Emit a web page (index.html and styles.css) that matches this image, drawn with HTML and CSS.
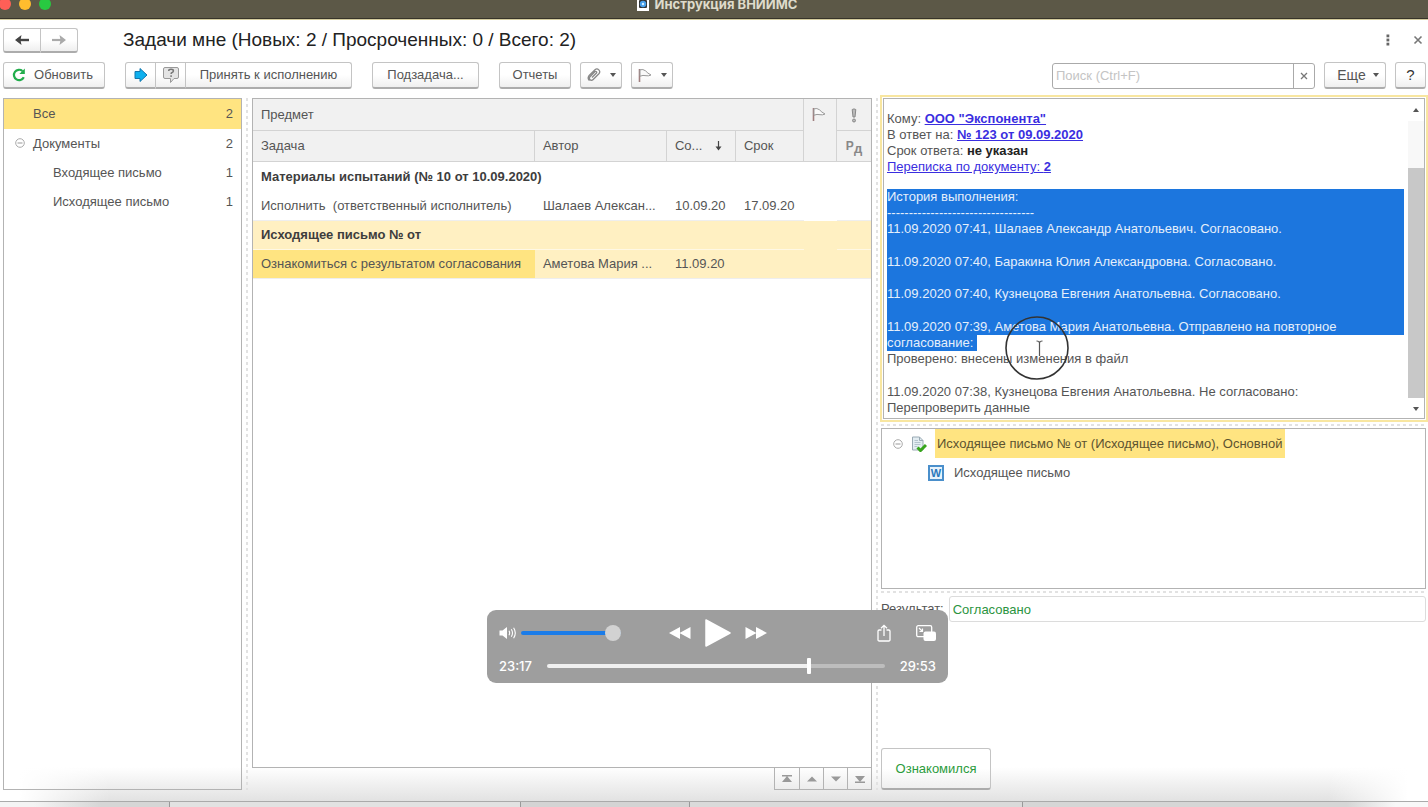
FILE: index.html
```html
<!DOCTYPE html>
<html lang="ru">
<head>
<meta charset="utf-8">
<title>Инструкция ВНИИМС</title>
<link rel="stylesheet" href="styles.css">
</head>
<body>
<header class="titlebar">
  <div class="lights"><span class="light red"></span><span class="light amber"></span><span class="light green"></span></div>
  <div class="doc-title">
    <svg width="12" height="14" viewBox="0 0 12 14"><rect width="12" height="14" fill="#fff"/><rect x="2" y="3" width="8" height="8" rx="1" fill="#333"/><circle cx="6" cy="7" r="3.2" fill="#49a0ea"/><circle cx="6" cy="7" r="1.2" fill="#d6efff"/></svg>
    <span>Инструкция ВНИИМС</span>
  </div>
</header>

<div class="heading">
  <div class="group nav">
    <button class="btn seg" aria-label="Назад"><svg width="16" height="12" viewBox="0 0 16 12"><path d="M3 6H15" fill="none" stroke="#444" stroke-width="2.400"/><path d="M7.500 1L1 6l6.500 5L6.500 6z" fill="#444"/></svg></button>
    <button class="btn seg" aria-label="Вперед"><svg width="16" height="12" viewBox="0 0 16 12"><path d="M1 6H13" fill="none" stroke="#aaa" stroke-width="2.200"/><path d="M8.500 1L15 6l-6.500 5L9.500 6z" fill="#aaa"/></svg></button>
  </div>
  <h1>Задачи мне (Новых: 2 / Просроченных: 0 / Всего: 2)</h1>
  <div class="window-tools">
    <button class="bare" aria-label="Меню"><svg width="4" height="12" viewBox="0 0 4 12" fill="#666"><rect x="0.500" y="0.500" width="2.800" height="2.800"/><rect x="0.500" y="4.600" width="2.800" height="2.800"/><rect x="0.500" y="8.700" width="2.800" height="2.800"/></svg></button>
    <button class="bare" aria-label="Закрыть"><svg width="10" height="10" viewBox="0 0 10 10"><path d="M1.500 1.500l7 7M8.500 1.500l-7 7" stroke="#777" stroke-width="1.600"/></svg></button>
  </div>
</div>

<div class="toolbar">
  <button class="btn refresh"><svg width="14" height="14" viewBox="0 0 14 14"><path d="M11.800 9.300A5.200 5.200 0 1 1 10.500 3" fill="none" stroke="#21ad4b" stroke-width="2.200"/><path d="M12.800 0.500v5.500h-5.500z" fill="#21ad4b"/></svg>Обновить</button>
  <div class="group accept">
    <button class="btn seg icon-seg" aria-label="Перейти"><svg width="14" height="16" viewBox="0 0 14 16"><path d="M1 4.500h5V1.500L13 8l-7 6.500v-3H1z" fill="#0fb0ee" stroke="#1277ae"/></svg></button>
    <button class="btn seg icon-seg" aria-label="Вопрос"><svg width="18" height="18" viewBox="0 0 18 18"><path d="M3 1.500h12a1.500 1.500 0 0 1 1.500 1.500v8a1.500 1.500 0 0 1-1.500 1.500h-3l-3.500 4v-4H3A1.500 1.500 0 0 1 1.500 11V3A1.500 1.500 0 0 1 3 1.500z" fill="#e4e4e4" stroke="#999"/><path d="M6.700 5q0-1.700 2.300-1.700 2.400 0 2.400 1.600 0 1-1.300 1.600-1 .4-1 1.500" fill="none" stroke="#777" stroke-width="1.500"/><rect x="8.300" y="9.300" width="1.600" height="1.600" fill="#777"/></svg></button>
    <button class="btn seg wide-seg">Принять к исполнению</button>
  </div>
  <button class="btn subtask">Подзадача...</button>
  <button class="btn reports">Отчеты</button>
  <button class="btn drop" aria-label="Файлы"><svg width="14" height="14" viewBox="0 0 14 14"><path d="M5 9.500L9.500 5a1 1 0 0 0-1.400-1.400L3 8.800a2 2 0 0 0 2.900 2.900l6-6A2.800 2.800 0 0 0 8 1.700L1.900 7.800a3.400 3.400 0 0 0 .6 4.800" fill="none" stroke="#888" stroke-width="1.300"/></svg><i class="caret"></i></button>
  <button class="btn drop" aria-label="Флаг"><svg width="14" height="15" viewBox="0 0 14 15"><path d="M1.500 1v13" stroke="#a07f7f" stroke-width="1.600"/><path d="M2 1.800q3-1 5.500 1 2 2.400 5.500 4.200-2.500 1.300-5 .7-3-.8-6 .5z" fill="#fafafa" stroke="#999"/></svg><i class="caret"></i></button>
  <div class="search">
    <input type="text" aria-label="Поиск" placeholder="Поиск (Ctrl+F)">
    <button class="clear" aria-label="Очистить"><svg width="8" height="8" viewBox="0 0 8 8"><path d="M1 1l6 6M7 1l-6 6" stroke="#777" stroke-width="1.300"/></svg></button>
  </div>
  <button class="btn more">Еще<i class="caret"></i></button>
  <button class="btn help">?</button>
</div>

<main class="panes">
  <nav class="box tree">
    <div class="tree-row selected"><span>Все</span><span>2</span></div>
    <div class="tree-row"><svg class="toggle" width="10" height="10" viewBox="0 0 10 10"><circle cx="5" cy="5" r="4.300" fill="none" stroke="#aaa"/><path d="M2.500 5h5" stroke="#999"/></svg><span>Документы</span><span>2</span></div>
    <div class="tree-row child"><span>Входящее письмо</span><span>1</span></div>
    <div class="tree-row child"><span>Исходящее письмо</span><span>1</span></div>
  </nav>
  <div class="split-v"></div>
  <section class="center">
    <div class="box list">
      <table>
        <colgroup><col><col class="c-author"><col class="c-date"><col class="c-due"><col class="c-flag"><col class="c-mark"></colgroup>
        <thead>
          <tr><th colspan="4">Предмет</th><th rowspan="2" class="flag"><svg width="14" height="15" viewBox="0 0 14 15"><path d="M1.500 1v13" stroke="#a07f7f" stroke-width="1.600"/><path d="M2 1.800q3-1 5.500 1 2 2.400 5.500 4.200-2.500 1.300-5 .7-3-.8-6 .5z" fill="#fafafa" stroke="#999"/></svg></th><th class="mark"><svg width="6" height="15" viewBox="0 0 6 15"><path d="M1.200 1.500q1.800-1.200 3.600 0L4 9H2z" fill="#bbb" stroke="#888"/><circle cx="3" cy="12.500" r="1.500" fill="#bbb" stroke="#888"/></svg></th></tr>
          <tr class="second"><th>Задача</th><th>Автор</th><th><span class="sort">Со...<svg width="7" height="10" viewBox="0 0 7 10"><path d="M3.500 0v8" stroke="#444" stroke-width="1.200"/><path d="M0.500 5.500h6l-3 4z" fill="#444"/></svg></span></th><th>Срок</th><th class="mark"><b class="rd">Р<sub>д</sub></b></th></tr>
        </thead>
        <tbody>
          <tr class="subject"><td colspan="4">Материалы испытаний (№ 10 от 10.09.2020)</td><td rowspan="2"></td><td></td></tr>
          <tr class="task"><td class="pre">Исполнить  (ответственный исполнитель)</td><td>Шалаев Алексан...</td><td>10.09.20</td><td>17.09.20</td><td></td></tr>
          <tr class="subject current"><td colspan="4">Исходящее письмо № от</td><td rowspan="2"></td><td></td></tr>
          <tr class="task current"><td class="cell-current">Ознакомиться с результатом согласования</td><td>Аметова Мария ...</td><td>11.09.20</td><td></td><td></td></tr>
        </tbody>
      </table>
    </div>
    <div class="pager">
      <button aria-label="В начало"><svg width="12" height="8" viewBox="0 0 12 8" fill="#999"><path d="M1 0h10v1.500H1zM6 1l5 6H1z"/></svg></button>
      <button aria-label="Вверх"><svg width="12" height="8" viewBox="0 0 12 8" fill="#999"><path d="M6 1.500l5 5H1z"/></svg></button>
      <button aria-label="Вниз"><svg width="12" height="8" viewBox="0 0 12 8" fill="#999"><path d="M6 6.500l5-5H1z"/></svg></button>
      <button aria-label="В конец"><svg width="12" height="8" viewBox="0 0 12 8" fill="#999"><path d="M1 6.500h10V8H1zM6 7l5-6H1z"/></svg></button>
    </div>
  </section>
  <div class="split-v"></div>
  <section class="right">
    <div class="focus">
      <div class="box memo">
        <div class="memo-text">
          <p>Кому: <a href="#"><b>ООО "Экспонента"</b></a></p>
          <p>В ответ на: <a href="#"><b>№ 123 от 09.09.2020</b></a></p>
          <p>Срок ответа: <b class="dark">не указан</b></p>
          <p><a href="#">Переписка по документу: <b>2</b></a></p>
          <div class="marked">
            <p>История выполнения:</p>
            <p>----------------------------------</p>
            <p>11.09.2020 07:41, Шалаев Александр Анатольевич. Согласовано.</p>
            <p class="gap"></p>
            <p>11.09.2020 07:40, Баракина Юлия Александровна. Согласовано.</p>
            <p></p>
            <p>11.09.2020 07:40, Кузнецова Евгения Анатольевна. Согласовано.</p>
            <p class="gap"></p>
            <p>11.09.2020 07:39, Аметова Мария Анатольевна. Отправлено на повторное</p>
          </div>
          <p><span class="marked-inline">согласование: </span></p>
          <p>Проверено: внесены изменения в файл</p>
          <p class="gap"></p>
          <p>11.09.2020 07:38, Кузнецова Евгения Анатольевна. Не согласовано:</p>
          <p>Перепроверить данные</p>
          <svg class="pointer" width="64" height="64" viewBox="0 0 64 64" fill="none"><circle cx="32" cy="32" r="31" stroke="#333" stroke-width="1.600"/><path d="M31.500 25q3 0 3 2v13M37.500 25q-3 0-3 2" stroke="#555" stroke-width="1.200"/></svg>
        </div>
        <div class="scroll"><i class="up"></i><div class="track"><div class="thumb"></div></div><i class="caret"></i></div>
      </div>
    </div>
    <div class="split-h"></div>
    <div class="box files">
      <div class="file-row"><svg width="10" height="10" viewBox="0 0 10 10"><circle cx="5" cy="5" r="4.300" fill="none" stroke="#aaa"/><path d="M2.500 5h5" stroke="#999"/></svg><svg width="16" height="16" viewBox="0 0 16 16"><path d="M1.500 1h7l3.500 3.500V14H1.500z" fill="#e3edf2" stroke="#9aaab4"/><path d="M8.500 1v3.500H12" fill="none" stroke="#9aaab4"/><path d="M3.500 4.500h3.500M3.500 6.500h6M3.500 8.500h6M3.500 10.500h3" stroke="#b4c4cd"/><path d="M6.500 11.500l3 3L15 9" fill="none" stroke="#37a51c" stroke-width="3"/></svg><span class="file-current">Исходящее письмо № от (Исходящее письмо), Основной</span></div>
      <div class="file-row nested"><span class="word">W</span><span>Исходящее письмо</span></div>
    </div>
    <div class="split-h"></div>
    <div class="result"><label for="result">Результат:</label><input id="result" type="text" value="Согласовано"></div>
    <button class="btn confirm">Ознакомился</button>
  </section>
</main>

<footer class="tabs"><span class="t1"></span><span class="t2"></span><span class="t3"></span><span class="t4"></span><span class="t5"></span></footer>

<div class="player">
  <div class="controls">
    <div class="volume"><svg width="18" height="14" viewBox="0 0 18 14"><path d="M0.500 4.500h3L8 1v12L3.500 9.500h-3z" fill="#fff"/><path d="M10 4.800q1.300 2.200 0 4.400M12.300 3.200q2.400 3.800 0 7.600M14.600 1.800q3.400 5.200 0 10.400" fill="none" stroke="#fff" stroke-width="1.100"/></svg><input type="range" aria-label="Громкость" min="0" max="100" value="100"></div>
    <div class="transport">
      <button class="bare" aria-label="Назад"><svg width="22" height="14" viewBox="0 0 22 14" fill="#fff"><path d="M11 1v12L0 7zM21.500 1v12L10.500 7z"/></svg></button>
      <button class="bare" aria-label="Воспроизвести"><svg width="26" height="28" viewBox="0 0 26 28" fill="#fff" stroke="#fff" stroke-width="1.500" stroke-linejoin="round"><path d="M1 1l24 13L1 27z"/></svg></button>
      <button class="bare" aria-label="Вперед"><svg width="22" height="14" viewBox="0 0 22 14" fill="#fff"><path d="M0.500 1v12l11-6zM11 1v12l11-6z"/></svg></button>
    </div>
    <div class="share">
      <button class="bare" aria-label="Поделиться"><svg width="14" height="18" viewBox="0 0 14 18" fill="none" stroke="#fff" stroke-width="1.300"><path d="M4.500 6H2.200a1.200 1.200 0 0 0-1.200 1.200v8.500A1.200 1.200 0 0 0 2.200 17h9.600a1.200 1.200 0 0 0 1.200-1.300V7.200A1.200 1.200 0 0 0 11.800 6H9.500M7 12V1.500M4 4.300l3-3 3 3"/></svg></button>
      <button class="bare" aria-label="Картинка в картинке"><svg width="20" height="18" viewBox="0 0 20 18"><rect x="0.700" y="1.700" width="15" height="11" rx="1.500" fill="none" stroke="#fff" stroke-width="1.300"/><path d="M3 4l3 3M6.500 4.500v3h-3" fill="none" stroke="#fff" stroke-width="1.200"/><rect x="7.500" y="7.500" width="12.500" height="9.500" rx="2" fill="#fff"/></svg></button>
    </div>
  </div>
  <div class="timeline"><span>23:17</span><input type="range" aria-label="Позиция" min="0" max="1793" value="1397"><span>29:53</span></div>
</div>
</body>
</html>
```
FILE: styles.css
```css
* { box-sizing: border-box; }
body {
  margin: 0;
  min-height: 100vh;
  display: flex;
  flex-direction: column;
  position: relative;
  font: 13px/16px "Liberation Sans", Arial, sans-serif;
  color: #555;
  background:
    linear-gradient(to right, #fff 20px, transparent 110px, transparent calc(100% - 100px), #fff calc(100% - 20px)),
    linear-gradient(to top, #e2e2e2 6px, #fff 40px);
}
button, input { font: inherit; color: inherit; margin: 0; }
button { padding: 0; }
p, h1 { margin: 0; }

.titlebar {
  height: 19px;
  margin-bottom: 1px;
  position: relative;
  background: #5c5847;
  border-bottom: 1px solid #37342a;
  box-shadow: 0 1px 0 #d5cd9f;
  display: flex;
  justify-content: center;
}
.lights { position: absolute; left: 0; top: 0; display: flex; gap: 8px; margin: -2px 0 0 -1px; }
.light { width: 12px; height: 12px; border-radius: 50%; }
.red { background: #ff5f57; }
.amber { background: #ffbd2e; }
.green { background: #28c941; }
.doc-title { display: flex; align-items: center; gap: 6px; height: 16px; margin-top: -4px; padding-left: 6px; font: 700 13px/16px Inter, sans-serif; color: #dedbcb; }

.btn {
  height: 27px;
  border: 1px solid #c4c4c4;
  border-bottom: 2px solid #acacac;
  border-radius: 3px;
  background: linear-gradient(#fff 50%, #efefef);
  display: flex;
  align-items: center;
  justify-content: center;
}
.bare { border: 0; background: none; display: flex; }
.group { display: flex; }
.seg { border-radius: 0; }
.seg + .seg { border-left: 0; }
.seg:first-child { border-radius: 3px 0 0 3px; }
.seg:last-child { border-radius: 0 3px 3px 0; }
.caret { border: 3px solid transparent; border-top: 4px solid #555; border-bottom: 0; }

.heading { display: flex; align-items: center; height: 42px; padding: 0 5px 2px 3px; }
.nav .btn { width: 37px; height: 25px; }
.nav .btn:first-child { width: 38px; }
h1 { font-size: 19px; line-height: 24px; font-weight: 400; color: #222; margin-left: 45px; }
.window-tools { margin-left: auto; display: flex; align-items: center; gap: 23px; }

.toolbar { display: flex; align-items: center; height: 27px; padding: 0 2px 0 3px; }
.refresh { width: 102px; gap: 8px; margin-right: 20px; padding-right: 3px; }
.icon-seg { width: 30px; }
.icon-seg:first-child { width: 31px; }
.wide-seg { width: 166px; }
.subtask { width: 107px; margin-left: 20px; }
.reports { width: 72px; margin-left: 20px; }
.drop { width: 42px; gap: 9px; margin-left: 9px; }
.search { flex: 0 1 263px; min-width: 0; height: 26px; margin-left: auto; display: flex; border: 1px solid #aaa; border-radius: 3px; background: #fff; }
.search input { flex: 1; min-width: 0; border: 0; padding: 0 3px; background: none; }
.search input::placeholder { color: #c4c4c4; opacity: 1; }
.clear { width: 21px; border: 0; border-left: 1px solid #aaa; background: none; display: flex; align-items: center; justify-content: center; }
.more { width: 62px; gap: 7px; margin-left: 9px; font-size: 14px; padding-left: 6px; }
.help { width: 31px; margin-left: 9px; font-size: 15px; color: #333; }

.panes { flex: 1; display: grid; grid-template-columns: 239px 10px minmax(0, 620fr) 9px minmax(0, 547fr); padding: 9px 0 11px 3px; }
.box { border: 1px solid #b3b3b3; background: #fff; }
.split-v { width: 2px; margin: 0 auto; background: repeating-linear-gradient(#e2e2e2 0 3px, transparent 3px 6px); }
.split-h { height: 2px; margin: 2px 0; background: repeating-linear-gradient(to right, #e2e2e2 0 3px, transparent 3px 6px); }
.tree { background: none; }
.tree-row { height: 29px; display: flex; align-items: center; justify-content: space-between; padding: 0 8px 0 29px; position: relative; }
.tree-row.selected { height: 30px; background: #ffe481; }
.tree-row.child { padding-left: 49px; }
.toggle { position: absolute; left: 11px; top: 9px; }

.center { display: flex; flex-direction: column; }
.list { flex: 1; }
table { width: 100%; table-layout: fixed; border-collapse: separate; border-spacing: 0; }
.c-author { width: 132px; }
.c-date { width: 69px; }
.c-due { width: 68px; }
.c-flag { width: 33px; }
.c-mark { width: 34px; }
th, td { padding: 0 8px; text-align: left; white-space: nowrap; overflow: hidden; }
th { height: 32px; font-weight: 400; background: #f1f1f1; border-right: 1px solid #d3d3d3; border-bottom: 1px solid #d3d3d3; }
.second th { height: 31px; }
th.mark { border-right: 0; padding: 0; text-align: center; }
.flag { vertical-align: top; padding-top: 8px; }
th svg { vertical-align: middle; }
.flag svg { display: block; }
.sort { display: flex; align-items: center; justify-content: space-between; padding-right: 5px; }
.rd { font-size: 12px; color: #888; }
.rd sub { font-size: 13px; line-height: 0; vertical-align: -3px; }
td { height: 29px; }
.subject td { font-weight: 700; color: #3d3d3d; }
.task td { height: 30px; border-bottom: 1px solid #eee; }
.pre { white-space: pre; }
.current td { background: #fff0c2; }
.subject.current td { height: 29px; border-bottom: 1px solid #fff8e4; }
.subject.current td[rowspan] { border-bottom-color: #eee; }
.task.current td { height: 29px; }
.current .cell-current { background: #ffe481; }
.pager { align-self: flex-end; display: flex; border: 1px solid #b3b3b3; border-top: 0; }
.pager button { width: 24px; height: 21px; border: 0; background: none; display: flex; align-items: center; justify-content: center; }
.pager button + button { border-left: 1px solid #b3b3b3; }

.right { display: flex; flex-direction: column; padding-right: 2px; }
.focus { border: 2px solid #f8e6a0; margin: -3px -2px 0 -1px; padding: 1px; }
.memo { display: flex; height: 321px; }
.memo-text { flex: 1; padding: 12px 3px 0; position: relative; overflow: hidden; }
.memo-text p { min-height: 16px; }
.memo-text .gap { min-height: 17px; }
a { color: #3a2ee0; }
.dark { color: #222; }
.marked { margin-top: 14px; }
.marked, .marked-inline { background: #1c76de; color: #e5effb; }
.marked-inline { white-space: pre; display: inline-block; }
.pointer { position: absolute; left: 121px; top: 217px; }
.scroll { width: 17px; display: flex; flex-direction: column; align-items: center; padding: 9px 0 7px; }
.up { border: 3px solid transparent; border-bottom: 4px solid #555; border-top: 0; }
.track { flex: 1; width: 16px; margin: 9px 0; background: #f8f8f8; display: flex; flex-direction: column; justify-content: flex-end; }
.thumb { height: 83%; background: #c8c8c8; }
.files { height: 161px; }
.file-row { height: 29px; display: flex; align-items: center; gap: 8px; padding-left: 11px; }
.file-row.nested { padding-left: 46px; gap: 10px; }
.file-current { align-self: stretch; display: flex; align-items: center; padding: 0 3px 0 2px; background: #ffe481; color: #5c5330; }
.word { width: 16px; height: 16px; border: 2px solid #4a8fcb; background: #e8f3fb; color: #2a78bd; font-size: 11px; line-height: 12px; font-weight: 700; text-align: center; }
.result { display: flex; align-items: center; gap: 5px; margin-top: 1px; }
.result input { flex: 1; min-width: 0; height: 26px; border: 1px solid #dcdcdc; border-radius: 3px; padding: 0 3px; color: #2b9440; background: #fff; }
.confirm { width: 110px; height: 42px; margin-top: auto; color: #2b9c3c; }

.tabs { height: 6px; border-top: 1px solid #aaa; display: flex; background: #dadada; }
.tabs span { border-right: 1px solid #999; }
.t1 { flex: 169; background: linear-gradient(to right, #f4f4f4 20%, #d6d6d6 60%); }
.t2 { flex: 351; background: #e2e2e2; }
.t3 { flex: 169; background: #d4d4d4; }
.t4 { flex: 333; }
.tabs .t5 { flex: 406; border-right: 0; background: linear-gradient(to right, #d6d6d6 80%, #f8f8f8 92%); }

.player { position: absolute; left: 487px; top: 610px; width: 461px; height: 73px; border-radius: 9px; background: #9e9e9e; color: #fff; padding: 9px 12px; display: flex; flex-direction: column; gap: 11px; }
.controls { display: grid; grid-template-columns: 1fr auto 1fr; align-items: center; height: 28px; }
.volume { display: flex; align-items: center; gap: 4px; }
.transport, .share { display: flex; align-items: center; gap: 14px; }
.share { justify-content: flex-end; gap: 25px; }
.player input { appearance: none; background: none; height: 16px; }
.volume input { width: 100px; }
.volume input::-webkit-slider-runnable-track { height: 4px; border-radius: 2px; background: #1b7ce8; }
.volume input::-webkit-slider-thumb { appearance: none; width: 16px; height: 16px; margin-top: -6px; border-radius: 50%; background: #d2d2d2; }
.timeline { display: flex; align-items: center; gap: 15px; font: 500 13px/16px Inter, sans-serif; }
.timeline input { flex: 1; min-width: 0; }
.timeline input::-webkit-slider-runnable-track { height: 4px; border-radius: 2px; background: linear-gradient(to right, #f0f0f0 77%, #bdbdbd 77%); }
.timeline input::-webkit-slider-thumb { appearance: none; width: 4px; height: 16px; margin-top: -6px; border-radius: 1px; background: #fff; }
```
